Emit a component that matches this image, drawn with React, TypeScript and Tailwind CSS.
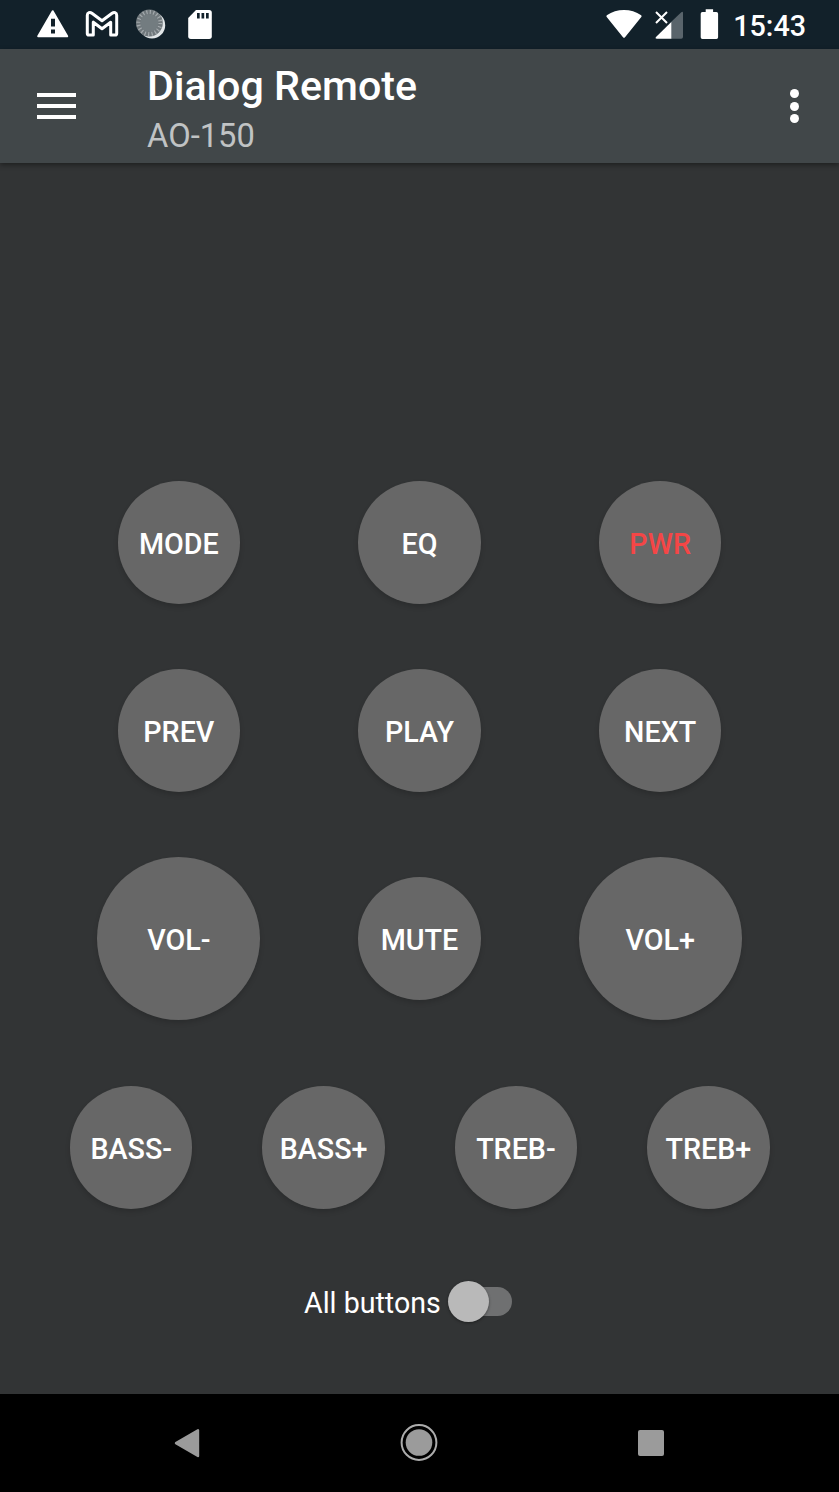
import React from "react";

const font = "font-[Roboto,sans-serif]";

type KeyProps = { label: string; large?: boolean; danger?: boolean };

function Key({ label, large, danger }: KeyProps) {
  return (
    <button
      className={`flex shrink-0 items-center justify-center justify-self-center rounded-full bg-[#676767] text-[28.7px] leading-none font-medium shadow-[0_3px_5px_rgba(0,0,0,0.15)] ${
        large ? "size-[163px] pt-[3px]" : "size-[122.5px] pt-[3.5px]"
      } ${danger ? "text-[#f44646]" : "text-white"}`}
    >
      {label}
    </button>
  );
}

function StatusBar() {
  return (
    <div className="flex h-[49px] items-center justify-between bg-[#12212a] pr-[33px] pl-[36px] text-white">
      <div className="flex items-center">
        <svg width="33" height="49" viewBox="36 0 33 49">
          <path d="M52.7 11.2 67.2 36.3H38.2Z" fill="#fff" stroke="#fff" strokeWidth="2" strokeLinejoin="round" />
          <path d="M51 18.8h4v7.8h-4zM51 29.4h4v4h-4z" fill="#12212a" />
        </svg>
        <svg className="ml-4" width="35" height="49" viewBox="85 0 35 49">
          <path
            d="M87.3 33.4V15.2C87.3 12.4 90 11.8 91.9 13.2L102 20.8 112.1 13.2C114 11.8 116.7 12.4 116.7 15.2V33.4Q116.7 35 115.1 35H110.7V22.2L102 28.8 93.3 22.2V35H88.9Q87.3 35 87.3 33.4Z"
            fill="none"
            stroke="#fff"
            strokeWidth="3"
            strokeLinejoin="round"
          />
        </svg>
        <svg className="ml-[15px]" width="32" height="49" viewBox="135 0 32 49">
          <circle cx="152" cy="25.2" r="13.2" fill="#e2e6e8" />
          <circle cx="149.4" cy="23" r="13.4" fill="#6f777b" />
          <circle cx="149.4" cy="23" r="11" fill="none" stroke="#a4aaad" strokeWidth="4" strokeDasharray="1.2 2.256" />
          <circle cx="149.4" cy="23" r="8.8" fill="#737c80" />
        </svg>
        <svg className="ml-5" width="27" height="49" viewBox="187 0 27 49">
          <path d="M196 10H209.2Q211.8 10 211.8 12.6V36.3Q211.8 39 209.2 39H190.8Q188.2 39 188.2 36.3V18Z" fill="#fff" />
          <path d="M197 13h2.7v5.5H197zM201.5 13h2.7v5.5h-2.7zM206 13h2.7v5.5H206z" fill="#12212a" />
        </svg>
      </div>
      <div className="flex items-center">
        <svg width="38" height="49" viewBox="605 0 38 49">
          <path d="M606.8 15.3Q614.5 10 624 10T641.2 15.3Q642 16.2 641.3 17L625 37.2Q624 38.4 623 37.2L606.7 17Q606 16.2 606.8 15.3Z" fill="#fff" />
        </svg>
        <svg className="ml-[11px]" width="30" height="49" viewBox="654 0 30 49">
          <path d="M671 22V38.8H681.2Q683 38.8 683 37V13Q683 10.8 681.3 12.2Z" fill="#59646b" />
          <path d="M671.3 22V38.8H656.8Q654.8 38.5 656 37Z" fill="#fff" />
          <path d="M656 12 667 23M667 12 656 23" stroke="#fff" strokeWidth="2" />
        </svg>
        <svg className="ml-4" width="20" height="49" viewBox="700 0 20 49">
          <path d="M705.7 9.2h7.4v2.9h3.3q1.7 0 1.7 1.7v23.4q0 1.7-1.7 1.7H702.4q-1.7 0-1.7-1.7V13.8q0-1.7 1.7-1.7h3.3Z" fill="#fff" />
        </svg>
        <span className="ml-[13px] pt-1 text-[28.7px] leading-none font-medium">15:43</span>
      </div>
    </div>
  );
}

function AppBar() {
  return (
    <header className="z-10 flex h-[114px] items-center bg-[#414749] pr-[38px] pl-[37px] shadow-[0_2px_5px_rgba(0,0,0,0.4)]">
      <button aria-label="Menu" className="flex w-[39px] flex-col gap-[7px]">
        <span className="h-1 bg-white" />
        <span className="h-1 bg-white" />
        <span className="h-1 bg-white" />
      </button>
      <div className="ml-[71px] flex-1 pt-[10px]">
        <h1 className="text-[41.2px] leading-[48px] font-medium text-white">Dialog Remote</h1>
        <p className="mt-0.5 text-[32.7px] leading-[48px] text-[#c0c3c4]">AO-150</p>
      </div>
      <button aria-label="More options" className="flex w-[13px] flex-col items-center gap-[3.5px]">
        <span className="size-[9px] rounded-full bg-white" />
        <span className="size-[9px] rounded-full bg-white" />
        <span className="size-[9px] rounded-full bg-white" />
      </button>
    </header>
  );
}

function NavBar() {
  return (
    <nav className="flex h-[98px] items-center justify-between bg-black pr-[175px] pl-[173px]">
      <svg width="28" height="40" viewBox="173 1423 28 40">
        <path d="M198 1430.3V1456L176 1443.1Z" fill="#9b9b9b" stroke="#9b9b9b" strokeWidth="2.4" strokeLinejoin="round" />
      </svg>
      <svg width="40" height="40" viewBox="1 0 40 40">
        <circle cx="20" cy="19.5" r="17.4" fill="none" stroke="#acacac" strokeWidth="2" />
        <circle cx="20" cy="19.5" r="13.3" fill="#9b9b9b" />
      </svg>
      <span className="size-[26px] rounded-[2px] bg-[#9b9b9b]" />
    </nav>
  );
}

export default function App() {
  return (
    <div className={`flex h-[1492px] w-[839px] flex-col overflow-hidden bg-[#323435] ${font}`}>
      <StatusBar />
      <AppBar />
      <main className="flex flex-1 flex-col pt-[318px]">
        <div className="grid grid-cols-3 items-center gap-y-[65.5px] pr-[58.5px] pl-[58.5px]">
          <Key label="MODE" />
          <Key label="EQ" />
          <Key label="PWR" danger />
          <Key label="PREV" />
          <Key label="PLAY" />
          <Key label="NEXT" />
          <Key label="VOL-" large />
          <Key label="MUTE" />
          <Key label="VOL+" large />
        </div>
        <div className="mt-[66px] grid grid-cols-4 pr-[34.5px] pl-[35px]">
          <Key label="BASS-" />
          <Key label="BASS+" />
          <Key label="TREB-" />
          <Key label="TREB+" />
        </div>
        <label className="mt-[72px] flex h-[41px] items-center pl-[304px]">
          <span className="pt-1 text-[28.6px] leading-none text-white">All buttons</span>
          <span className="ml-[7px] flex h-[41px] w-[65px] items-center">
            <span className="z-10 size-[41px] shrink-0 rounded-full bg-[#b9b9b9] shadow-[0_1px_3px_rgba(0,0,0,0.4)]" />
            <span className="-ml-[29px] h-[29px] w-[52px] shrink-0 rounded-full bg-[#6f7071]" />
          </span>
        </label>
      </main>
      <NavBar />
    </div>
  );
}
